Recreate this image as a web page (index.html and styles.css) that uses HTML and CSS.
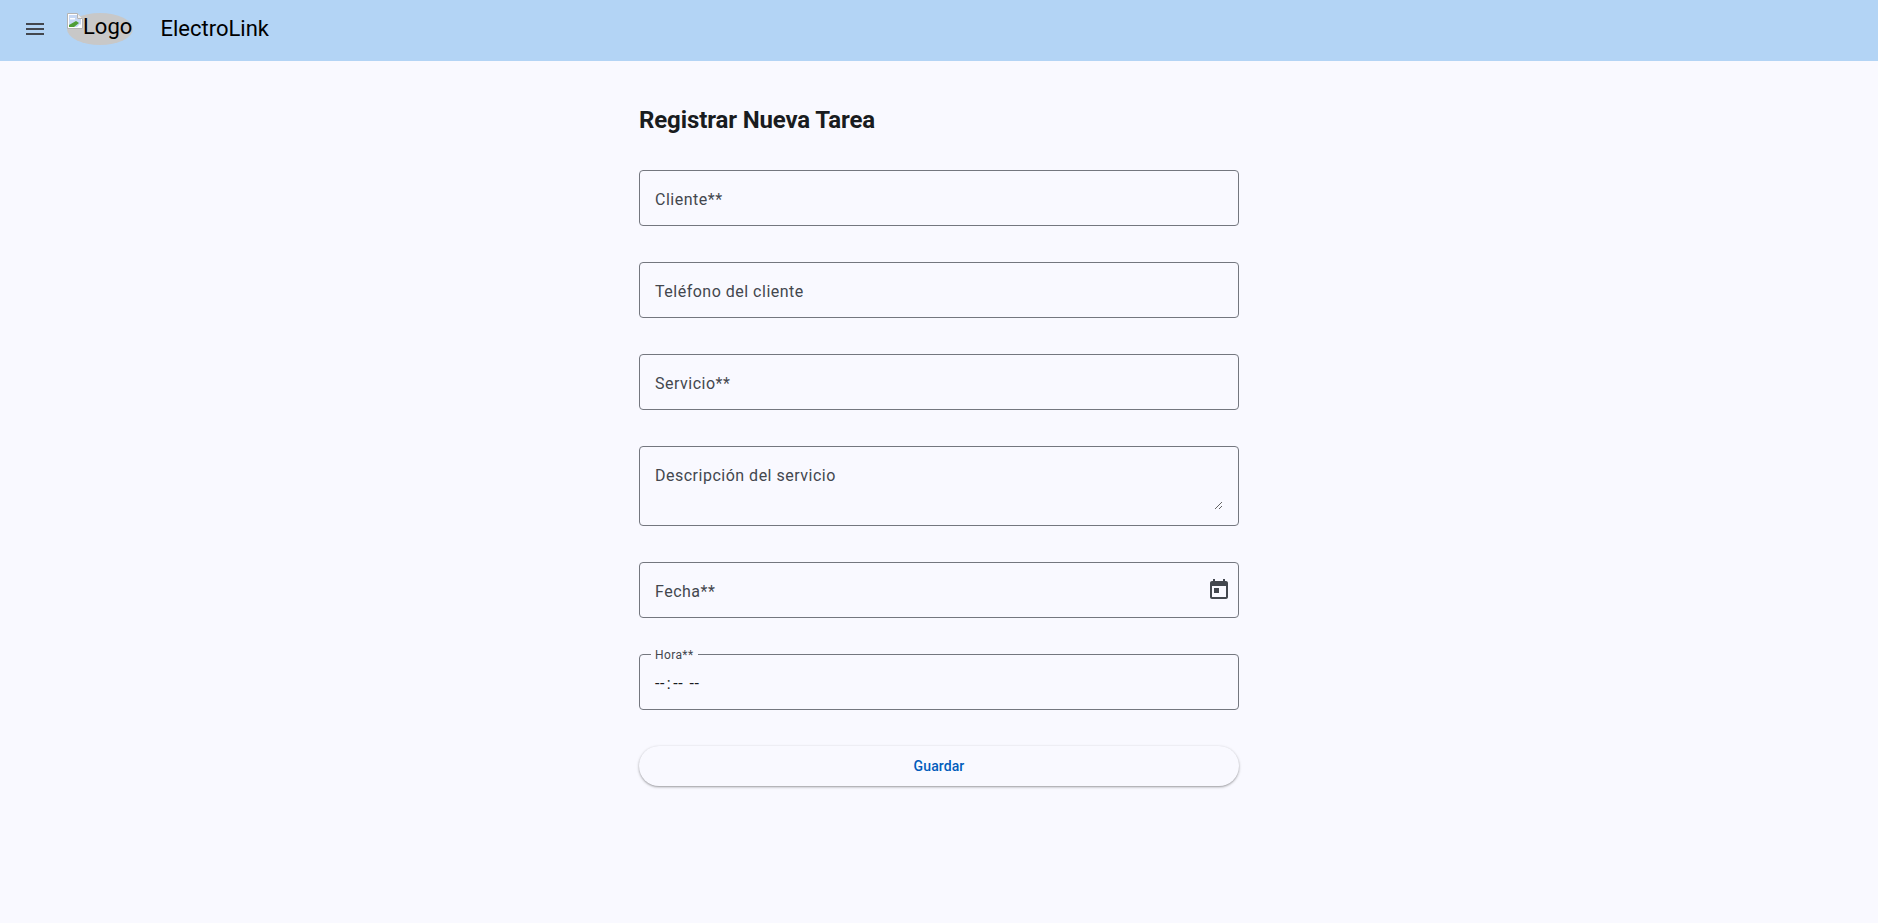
FILE: index.html
```html
<!DOCTYPE html>
<html lang="es">
<head>
  <meta charset="UTF-8" />
  <title>ElectroLink</title>
  <link rel="stylesheet" href="styles.css">
</head>
<body>
  <header class="toolbar">
    <button class="menu-btn" aria-label="Menu">
      <svg viewBox="0 0 24 24" width="24" height="24"><path d="M3 18h18v-2H3v2zm0-5h18v-2H3v2zm0-7v2h18V6H3z"/></svg>
    </button>
    <div class="logo">
      <svg class="broken" viewBox="0 0 16 16" width="16" height="16">
        <path d="M0.5 0.5h10l5 5v10h-15z" fill="#fff" stroke="#b4b4b4"/>
        <path d="M2 2h8v4h4v8H2z" fill="#c6d8f4"/>
        <path d="M3 5h5v1.500H3z" fill="#fff"/>
        <path d="M2 14v-2l7-4 3 2-5 4z" fill="#4f9e36"/>
        <path d="M10 14l3-3 1 1v2z" fill="#fff"/>
        <path d="M10.500 0.500v5h5" fill="#eee" stroke="#b4b4b4"/>
      </svg><span>Logo</span>
    </div>
    <span class="brand">ElectroLink</span>
  </header>

  <main class="page">
    <h1>Registrar Nueva Tarea</h1>
    <form class="task-form">
      <label class="field"><span class="label">Cliente**</span><input type="text"></label>
      <label class="field"><span class="label">Teléfono del cliente</span><input type="text"></label>
      <label class="field"><span class="label">Servicio**</span><input type="text"></label>
      <label class="field field-area"><span class="label">Descripción del servicio</span><textarea></textarea></label>
      <label class="field">
        <span class="label">Fecha**</span><input type="text">
        <svg class="date-icon" viewBox="0 0 24 24" width="24" height="24"><path d="M19 3h-1V1h-2v2H8V1H6v2H5c-1.110 0-1.990.9-1.990 2L3 19c0 1.100.89 2 2 2h14c1.100 0 2-.9 2-2V5c0-1.100-.9-2-2-2zm0 16H5V8h14v11zM7 10h5v5H7z"/></svg>
      </label>
      <label class="field">
        <span class="label label-float">Hora**</span>
        <span class="time-value">--<span class="colon">:</span>-- --</span>
        <input type="text">
      </label>
      <button type="button" class="save-btn">Guardar</button>
    </form>
  </main>
</body>
</html>
```

FILE: styles.css
```css
* {
  box-sizing: border-box;
}

body {
  margin: 0;
  min-height: 100vh;
  background: #f9f9ff;
  color: #191c20;
  font-family: Roboto, sans-serif;
}

.toolbar {
  height: 61px;
  background: #b3d4f5;
  display: flex;
  align-items: center;
  padding: 0 0 2px 15px;
  color: #000;
}

.menu-btn {
  width: 40px;
  height: 40px;
  border: none;
  background: none;
  padding: 8px;
  fill: #43474e;
  cursor: pointer;
  margin: -1px 12px 0 0;
}

.logo {
  width: 66px;
  height: 32px;
  margin-top: -1px;
  background: #c8c8c8;
  border-radius: 50%;
  font-size: 22px;
  line-height: 27px;
  white-space: nowrap;
}

.broken {
  vertical-align: top;
}

.brand {
  margin-left: 27.5px;
  font-size: 22px;
  position: relative;
  top: -1px;
}

.page {
  width: 600px;
  margin: 0 auto;
  padding-top: 43px;
}

h1 {
  margin: 0 0 34px;
  font-size: 24px;
  line-height: 32px;
  font-weight: 700;
  letter-spacing: -0.12px;
}

.task-form {
  display: flex;
  flex-direction: column;
  gap: 36px;
}

.field {
  position: relative;
  display: block;
  height: 56px;
  border: 1px solid #74777f;
  border-radius: 4px;
}

.field-area {
  height: 80px;
  padding: 15px;
}

.field input,
.field textarea {
  display: block;
  width: 100%;
  height: 100%;
  border: none;
  background: none;
  outline: none;
  padding: 0;
}

.field textarea {
  resize: vertical;
}

.label {
  position: absolute;
  left: 15px;
  top: 17px;
  font-size: 16px;
  line-height: 24px;
  letter-spacing: 0.5px;
  color: #43474e;
}

.label-float {
  top: -8px;
  left: 11px;
  padding: 0 4px;
  background: #f9f9ff;
  font-size: 12px;
  line-height: 16px;
  letter-spacing: 0.4px;
}

.time-value {
  position: absolute;
  left: 15px;
  top: 17px;
  font-size: 16px;
  line-height: 24px;
  letter-spacing: 0.5px;
  word-spacing: 2px;
  color: #191c20;
}

.colon {
  margin: 0 2px;
}

.date-icon {
  position: absolute;
  right: 7px;
  top: 15px;
  fill: #43474e;
}

.save-btn {
  height: 40px;
  border: none;
  border-radius: 20px;
  background: #f9f9ff;
  color: #005cbb;
  font-family: Roboto, sans-serif;
  font-size: 14px;
  font-weight: 500;
  letter-spacing: 0.1px;
  cursor: pointer;
  box-shadow: 0 1px 2px rgba(0, 0, 0, 0.3), 0 1px 3px 1px rgba(0, 0, 0, 0.08);
}
```
